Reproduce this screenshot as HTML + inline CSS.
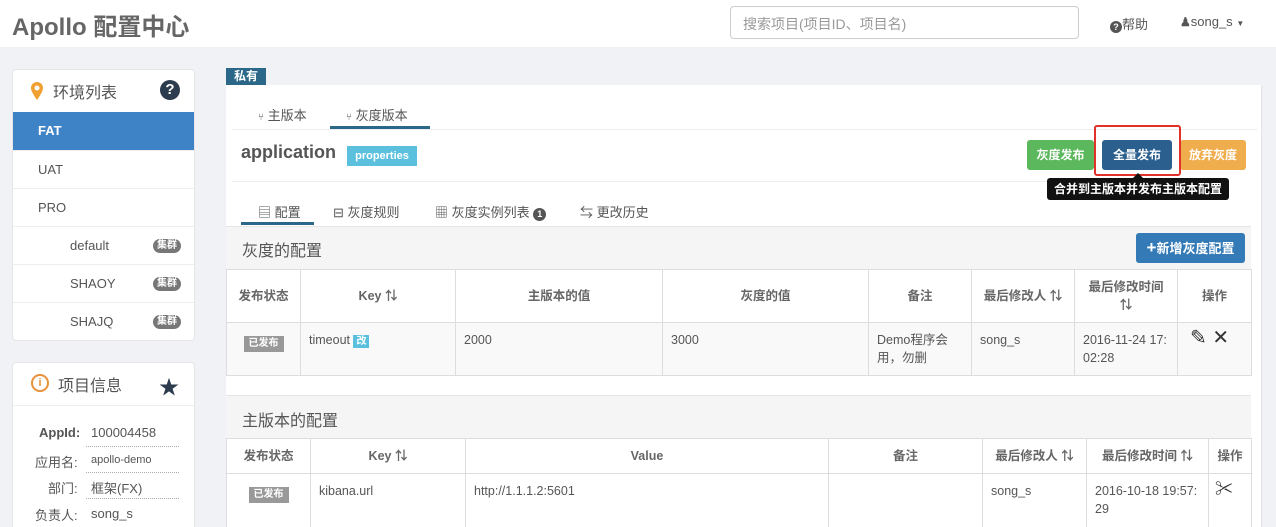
<!DOCTYPE html>
<html><head><meta charset="utf-8"><style>
*{box-sizing:border-box;margin:0;padding:0}
html,body{width:1276px;height:527px;overflow:hidden}
body{background:#f1f2f5;font-family:"Liberation Sans","Noto Sans CJK SC",sans-serif;color:#555;font-size:13px;position:relative}
.a{position:absolute}
.hdr{left:0;top:0;width:1276px;height:47px;background:#fff}
.panel{background:#fff;border-radius:4px;border:1px solid #e6e6e6}
.row{position:absolute;left:0;width:182px;height:38px;border-top:1px solid #eee;line-height:37px;font-size:13px;color:#555}
.badge{position:absolute;right:14px;top:12px;background:#777;color:#fff;font-size:10px;border-radius:8px;padding:0 4px;height:14px;line-height:14px;font-weight:bold}
table{border-collapse:collapse;position:absolute;table-layout:fixed}
td,th{border:1px solid #ddd;font-size:12.5px;color:#555;vertical-align:top;padding:8px 8px;text-align:left;font-weight:normal;line-height:18px;word-break:break-all;overflow:hidden}
th{text-align:center;font-weight:bold;vertical-align:middle;padding:2px 4px;color:#666}
.pub{background:#999;color:#fff;font-size:10px;font-weight:bold;padding:0 5px;display:inline-block;line-height:16px}
.btn{position:absolute;color:#fff;font-size:12px;font-weight:bold;text-align:center;line-height:30px;height:30px;border-radius:3px}
.tab{position:absolute;font-size:13px;color:#555}
</style></head><body>
<div class="a hdr"></div>
<div class="a" style="left:12px;top:7px;font-size:24px;font-weight:bold;color:#666">Apollo 配置中心</div>
<div class="a" style="left:730px;top:6px;width:349px;height:33px;border:1px solid #ccc;border-radius:4px;padding:7px 12px;color:#999;font-size:14px">搜索项目(项目ID、项目名)</div>
<div class="a" style="left:1110px;top:14px;font-size:13px;color:#555"><span style="display:inline-block;width:12px;height:12px;border-radius:6px;background:#555;color:#fff;font-size:9px;text-align:center;line-height:12px;font-weight:bold;vertical-align:-1px">?</span>帮助</div>
<div class="a" style="left:1180px;top:14px;font-size:13px;color:#555"><b style="font-size:12px">&#9823;</b>song_s <span style="font-size:8px">▼</span></div>

<div class="a panel" style="left:12px;top:69px;width:183px;height:272px;overflow:hidden">
 <svg class="a" style="left:17px;top:11px" width="14" height="20" viewBox="0 0 14 20"><path d="M7 1a6 6 0 0 0-6 6c0 4 6 12 6 12s6-8 6-12a6 6 0 0 0-6-6z" fill="#f0a030"/><circle cx="7" cy="7" r="2.5" fill="#fff"/></svg>
 <div class="a" style="left:40px;top:9px;font-size:16px;color:#555">环境列表</div>
 <div class="a" style="left:147px;top:10px;width:20px;height:20px;border-radius:10px;background:#2d3b4e;color:#fff;font-weight:bold;text-align:center;line-height:20px;font-size:15px">?</div>
 <div class="row" style="top:42px;background:#3f83c7;color:#fff;font-weight:bold;padding-left:25px;border:none">FAT</div>
 <div class="row" style="top:80px;padding-left:25px">UAT</div>
 <div class="row" style="top:118px;padding-left:25px">PRO</div>
 <div class="row" style="top:156px;padding-left:57px">default<span class="badge">集群</span></div>
 <div class="row" style="top:194px;padding-left:57px">SHAOY<span class="badge">集群</span></div>
 <div class="row" style="top:232px;padding-left:57px">SHAJQ<span class="badge">集群</span></div>
</div>
<div class="a panel" style="left:12px;top:362px;width:183px;height:180px">
 <div class="a" style="left:18px;top:11px;width:18px;height:18px;border:2px solid #e8923a;border-radius:9px;color:#e8923a;font-size:11px;text-align:center;line-height:14px;font-weight:bold">i</div>
 <div class="a" style="left:45px;top:9px;font-size:16px;color:#555">项目信息</div>
 <div class="a" style="left:146px;top:8px;font-size:20px;color:#2d3b4e">★</div>
 <div class="a" style="left:0;top:42px;width:181px;border-top:1px solid #eee"></div>
 <div class="a" style="left:26px;top:62px;font-weight:bold;font-size:13px">AppId:</div><div class="a" style="left:78px;top:62px;font-size:13px">100004458</div>
 <div class="a" style="left:73px;top:83px;width:93px;border-top:1px dotted #aaa"></div>
 <div class="a" style="left:22px;top:89px;font-size:13px">应用名:</div><div class="a" style="left:78px;top:91px;font-size:11px">apollo-demo</div>
 <div class="a" style="left:73px;top:109px;width:93px;border-top:1px dotted #aaa"></div>
 <div class="a" style="left:35px;top:115px;font-size:13px">部门:</div><div class="a" style="left:78px;top:115px;font-size:13px">框架(FX)</div>
 <div class="a" style="left:73px;top:135px;width:93px;border-top:1px dotted #aaa"></div>
 <div class="a" style="left:22px;top:142px;font-size:13px">负责人:</div><div class="a" style="left:78px;top:143px;font-size:13px">song_s</div>
</div>

<div class="a" style="left:226px;top:68px;width:40px;height:17px;background:#2a6788;color:#fff;font-size:12px;font-weight:bold;text-align:center;line-height:17px">私有</div>
<div class="a" style="left:226px;top:85px;width:1036px;height:442px;background:#fff;border-right:1px solid #e3e3e3"></div>
<div class="tab" style="left:258px;top:105px"><span style="font-size:10px">⑂</span> 主版本</div>
<div class="tab" style="left:346px;top:105px"><span style="font-size:10px">⑂</span> 灰度版本</div>
<div class="a" style="left:330px;top:126px;width:100px;height:3px;background:#2a6788"></div>
<div class="a" style="left:232px;top:129px;width:1025px;border-top:1px solid #eee"></div>
<div class="a" style="left:241px;top:142px;font-size:18px;font-weight:bold;color:#555">application</div>
<div class="a" style="left:347px;top:146px;width:70px;height:20px;background:#5bc0de;color:#fff;font-size:11px;font-weight:bold;text-align:center;line-height:20px">properties</div>
<div class="btn" style="left:1027px;top:140px;width:67px;background:#5cb85c">灰度发布</div>
<div class="btn" style="left:1102px;top:140px;width:70px;background:#2b5f8e">全量发布</div>
<div class="btn" style="left:1180px;top:140px;width:66px;background:#f0ad4e">放弃灰度</div>
<div class="a" style="left:1094px;top:125px;width:87px;height:51px;border:2px solid #e0312a;border-radius:3px"></div>
<div class="a" style="left:1133px;top:173px;width:0;height:0;border:5px solid transparent;border-bottom-color:#111;border-top:0"></div>
<div class="a" style="left:1047px;top:178px;width:182px;height:22px;background:#111;color:#fff;font-size:12px;font-weight:bold;text-align:center;line-height:22px;border-radius:3px">合并到主版本并发布主版本配置</div>
<div class="a" style="left:232px;top:181px;width:815px;border-top:1px solid #eee"></div>
<div class="tab" style="left:258px;top:202px">▤ 配置</div>
<div class="a" style="left:241px;top:222px;width:73px;height:3px;background:#2a6788"></div>
<div class="tab" style="left:333px;top:202px">⊟ 灰度规则</div>
<div class="tab" style="left:435px;top:202px">▦ 灰度实例列表 <span style="display:inline-block;width:13px;height:13px;border-radius:7px;background:#555;color:#fff;font-size:9px;text-align:center;line-height:13px;font-weight:bold">1</span></div>
<div class="tab" style="left:580px;top:202px">⇆ 更改历史</div>

<div class="a" style="left:226px;top:226px;width:1025px;height:43px;background:#f5f5f5;border-top:1px solid #e5e5e5"></div>
<div class="a" style="left:242px;top:237px;font-size:16px;color:#555">灰度的配置</div>
<div class="btn" style="left:1136px;top:233px;width:109px;background:#337ab7;font-size:13px"><b style="font-size:17px">+</b>新增灰度配置</div>

<table style="left:226px;top:269px;width:1025px">
<colgroup><col style="width:74px"><col style="width:155px"><col style="width:207px"><col style="width:206px"><col style="width:103px"><col style="width:103px"><col style="width:103px"><col style="width:74px"></colgroup>
<tr style="height:53px"><th>发布状态</th><th>Key ⇅</th><th>主版本的值</th><th>灰度的值</th><th>备注</th><th>最后修改人 ⇅</th><th>最后修改时间<br>⇅</th><th>操作</th></tr>
<tr style="height:53px;background:#f9f9f9"><td style="text-align:center;padding-top:10px"><span class="pub">已发布</span></td><td>timeout <span style="background:#5bc0de;color:#fff;font-size:10px;padding:1px 3px;font-weight:bold">改</span></td><td>2000</td><td>3000</td><td>Demo程序会用，勿删</td><td>song_s</td><td>2016-11-24 17:02:28</td><td style="font-size:20px;padding:6px 12px;color:#333">✎ ✕</td></tr>
</table>
<div class="a" style="left:226px;top:395px;width:1025px;height:44px;background:#f5f5f5;border-top:1px solid #e5e5e5"></div>
<div class="a" style="left:242px;top:407px;font-size:16px;color:#555">主版本的配置</div>
<table style="left:226px;top:438px;width:1025px">
<colgroup><col style="width:84px"><col style="width:155px"><col style="width:363px"><col style="width:154px"><col style="width:104px"><col style="width:122px"><col style="width:43px"></colgroup>
<tr style="height:35px;background:#fff"><th>发布状态</th><th>Key ⇅</th><th>Value</th><th>备注</th><th>最后修改人 ⇅</th><th>最后修改时间 ⇅</th><th>操作</th></tr>
<tr style="height:60px;background:#fff"><td style="text-align:center;padding-top:10px"><span class="pub">已发布</span></td><td>kibana.url</td><td>http://1.1.1.2:5601</td><td></td><td>song_s</td><td>2016-10-18 19:57:29</td><td style="font-size:18px;padding:6px;color:#333">✂</td></tr>
</table>
</body></html>
